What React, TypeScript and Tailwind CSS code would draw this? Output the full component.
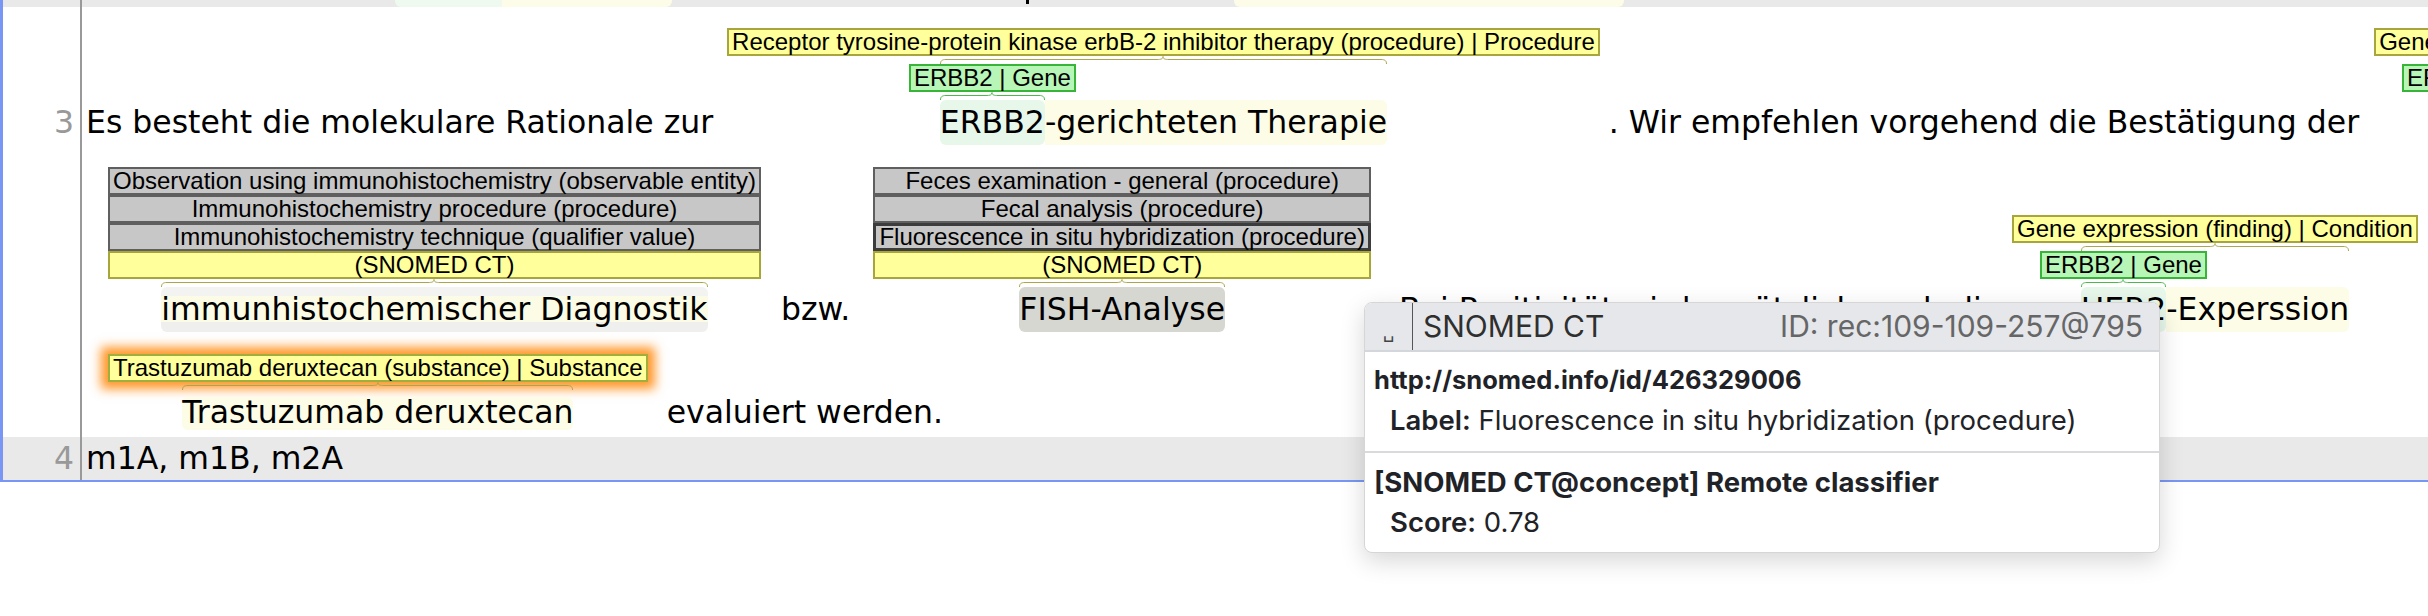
const MAIN = "font-['DejaVu_Sans',sans-serif]"
const LABEL = "font-['Liberation_Sans',Arial,sans-serif]"

type Tone = 'none' | 'yellow' | 'yellowR' | 'greenL' | 'gray' | 'ihc'

const toneClass: Record<Tone, string> = {
  none: '',
  yellow: 'rounded-md bg-[#fcfce7]',
  yellowR: 'rounded-r-md bg-[#fcfce7]',
  greenL: 'rounded-md bg-[#e7f8ea]',
  gray: 'rounded-md bg-[#d7d7d2]',
  ihc: 'rounded-md bg-[linear-gradient(to_bottom,#f3f3f1_9px,#fcfce6_9px,#fcfce6_35px,#efefed_35px)]',
}

/** Text segment on a visual row */
function Seg({ children, tone = 'none', short = false }: { children: string; tone?: Tone; short?: boolean }) {
  return (
    <span
      className={`block shrink-0 whitespace-pre text-[31.5px] text-black ${
        short ? 'h-[33px] leading-[30px]' : 'h-[45px] leading-[45px]'
      } ${toneClass[tone]}`}
    >
      {children}
    </span>
  )
}

type TagKind = 'yellow' | 'green' | 'gray' | 'grayActive' | 'glow'

const tagClass: Record<TagKind, string> = {
  yellow: 'h-[28px] border-2 border-[#a8a53c] bg-[#ffff9c] leading-[24px]',
  green: 'h-[28px] border-2 border-[#38b438] bg-[#b7f6b7] leading-[24px]',
  gray: 'h-[28px] border-2 border-[#5f5f5f] bg-[#c7c7c7] leading-[24px]',
  grayActive: 'h-[28px] border-[3px] border-[#3c3c3c] bg-[#c7c7c7] leading-[22px]',
  glow: 'h-[28px] border-2 border-[#9fae3c] bg-[#ffff9c] leading-[24px] shadow-[0_0_10px_7px_rgba(255,140,20,0.9)]',
}

function Tag({ children, kind }: { children: string; kind: TagKind }) {
  return (
    <div className={`${LABEL} shrink-0 whitespace-nowrap px-[3px] text-center text-[24px] text-black ${tagClass[kind]}`}>
      {children}
    </div>
  )
}

/** Label that is wider than its span: centred, but takes no room */
function Over({ children }: { children: React.ReactNode }) {
  return <div className="flex h-[28px] w-0 justify-center self-center">{children}</div>
}

function Brace({ tone }: { tone: 'olive' | 'green' }) {
  const color = tone === 'green' ? 'text-[#4cb84c]' : 'text-[#a9a64e]'
  return (
    <div className={`flex h-[8px] w-full ${color}`}>
      <svg width="6" height="8" viewBox="0 0 6 8" className="shrink-0">
        <path d="M0.5 8 C0.5 4.8 2 3.5 6 3.5" fill="none" stroke="currentColor" />
      </svg>
      <div className="mt-[3px] h-px flex-1 bg-current" />
      <svg width="12" height="8" viewBox="0 0 12 8" className="shrink-0">
        <path d="M0 3.5 C4 3.5 6 3 6 0.5 C6 3 8 3.5 12 3.5" fill="none" stroke="currentColor" />
      </svg>
      <div className="mt-[3px] h-px flex-1 bg-current" />
      <svg width="6" height="8" viewBox="0 0 6 8" className="shrink-0">
        <path d="M0 3.5 C4 3.5 5.5 4.8 5.5 8" fill="none" stroke="currentColor" />
      </svg>
    </div>
  )
}

function Stack({ items, active }: { items: string[]; active?: number }) {
  return (
    <div className="flex w-max flex-col">
      {items.map((t, i) => (
        <Tag key={t} kind={i === active ? 'grayActive' : 'gray'}>
          {t}
        </Tag>
      ))}
      <Tag kind="yellow">(SNOMED CT)</Tag>
    </div>
  )
}

function HerChunk({ className }: { className: string }) {
  return (
    <div className={`flex shrink-0 flex-col items-center ${className}`}>
      <Tag kind="yellow">Gene expression (finding) | Condition</Tag>
      <div className="flex flex-col">
        <Brace tone="olive" />
        <div className="flex items-end">
          <div className="flex flex-col items-center">
            <Over>
              <Tag kind="green">ERBB2 | Gene</Tag>
            </Over>
            <Brace tone="green" />
            <Seg tone="greenL">HER2</Seg>
          </div>
          <Seg tone="yellowR">-Experssion</Seg>
        </div>
      </div>
    </div>
  )
}

function Gutter({ n, className }: { n?: string; className: string }) {
  return (
    <div className={`w-[79px] shrink-0 border-r-2 border-[#999] pr-[6px] text-right text-[31.5px] text-[#999] ${className}`}>
      {n}
    </div>
  )
}

export default function App() {
  return (
    <div className={`${MAIN} relative h-[616px] w-full overflow-hidden bg-white`}>
      <div className="border-b-2 border-l-[3px] border-[#7897f4]">
        {/* tail of line 2 */}
        <div className="flex h-[7px] overflow-hidden bg-[#e9e9e9]">
          <Gutter className="h-[7px]" />
          <div className="ml-[313px] h-[7px] w-[107px] shrink-0 rounded-bl-md bg-[#eefaef]" />
          <div className="h-[7px] w-[170px] shrink-0 rounded-br-md bg-[#fcfce8]" />
          <div className="ml-[354px] h-[4px] w-[3px] shrink-0 bg-black" />
          <div className="ml-[205px] h-[7px] w-[390px] shrink-0 rounded-b-md bg-[#fcfce8]" />
        </div>

        {/* line 3 */}
        <div className="flex">
          <Gutter n="3" className="pt-[93px] leading-[45px]" />
          <div className="flex min-w-0 flex-1 flex-col overflow-hidden">
            <div className="flex h-[138px] items-end pl-[4px]">
              <Seg>Es besteht die molekulare Rationale zur </Seg>
              <div className="ml-[4px] mr-[9px] flex shrink-0 flex-col items-center">
                <Tag kind="yellow">Receptor tyrosine-protein kinase erbB-2 inhibitor therapy (procedure) | Procedure</Tag>
                <div className="flex flex-col">
                  <Brace tone="olive" />
                  <div className="flex items-end">
                    <div className="flex flex-col items-center">
                      <Over>
                        <Tag kind="green">ERBB2 | Gene</Tag>
                      </Over>
                      <Brace tone="green" />
                      <Seg tone="greenL">ERBB2</Seg>
                    </div>
                    <Seg tone="yellowR">-gerichteten Therapie</Seg>
                  </div>
                </div>
              </div>
              <Seg>. Wir empfehlen vorgehend die Bestätigung der </Seg>
              <HerChunk className="ml-[5px]" />
            </div>

            <div className="flex h-[187px] items-end pl-[16px]">
              <div className="ml-[10px] mr-[10px] flex shrink-0 flex-col items-center">
                <Stack
                  items={[
                    'Observation using immunohistochemistry (observable entity)',
                    'Immunohistochemistry procedure (procedure)',
                    'Immunohistochemistry technique (qualifier value)',
                  ]}
                />
                <div className="flex flex-col">
                  <Brace tone="olive" />
                  <Seg tone="ihc">immunhistochemischer Diagnostik</Seg>
                </div>
              </div>
              <Seg> bzw. </Seg>
              <div className="ml-[13px] mr-[8px] flex shrink-0 flex-col items-center">
                <Stack
                  items={[
                    'Feces examination - general (procedure)',
                    'Fecal analysis (procedure)',
                    'Fluorescence in situ hybridization (procedure)',
                  ]}
                  active={2}
                />
                <div className="flex flex-col">
                  <Brace tone="olive" />
                  <Seg tone="gray">FISH-Analyse</Seg>
                </div>
              </div>
              <Seg>. Bei Positivität wird zusätzlich auch die </Seg>
              <HerChunk className="ml-[1px]" />
            </div>

            <div className="flex h-[98px] items-end pl-[16px]">
              <div className="ml-[10px] mr-[9px] flex shrink-0 flex-col items-center">
                <Tag kind="glow">Trastuzumab deruxtecan (substance) | Substance</Tag>
                <div className="flex flex-col">
                  <Brace tone="olive" />
                  <div className="h-[7px]" />
                  <Seg tone="yellow" short>
                    Trastuzumab deruxtecan
                  </Seg>
                </div>
              </div>
              <Seg short> evaluiert werden.</Seg>
            </div>
            <div className="h-[7px]" />
          </div>
        </div>

        {/* line 4 */}
        <div className="flex h-[43px] bg-[#e9e9e9]">
          <Gutter n="4" className="leading-[43px]" />
          <div className="pl-[4px] text-[31.5px] leading-[43px] text-black">m1A, m1B, m2A</div>
        </div>
      </div>

      {/* hover popup */}
      <div className="absolute left-[1364px] top-[302px] w-[796px] overflow-hidden rounded-lg border border-[#d6d6d6] bg-white font-['Inter',sans-serif] shadow-[0_8px_24px_rgba(0,0,0,0.16)]">
        <div className="flex h-[49px] border-b-2 border-[#d3d6db] bg-[#e5e7eb]">
          <div className="flex w-[47px] items-end justify-center pb-[9px] font-['DejaVu_Sans',sans-serif] text-[18px] leading-none text-[#444]">
            ␣
          </div>
          <div className="w-px bg-[#555]" />
          <div className="flex flex-1 items-center justify-between pl-[10px] pr-[16px] text-[30px]">
            <span className="text-[#2f2f2f]">SNOMED CT</span>
            <span className="text-[#666]">ID: rec:109-109-257@795</span>
          </div>
        </div>
        <div className="px-[9px] pb-[11px] pt-[8px] text-[27.5px] leading-[40px] text-[#1f2328]">
          <div className="text-[25.5px] font-bold">http://snomed.info/id/426329006</div>
          <div className="pl-[16px]">
            <span className="font-semibold">Label:</span> Fluorescence in situ hybridization (procedure)
          </div>
        </div>
        <div className="border-t-2 border-[#d8dadd] px-[9px] pb-[10px] pt-[9px] text-[27.5px] leading-[40px] text-[#1f2328]">
          <div className="font-bold">[SNOMED CT@concept] Remote classifier</div>
          <div className="pl-[16px]">
            <span className="font-semibold">Score:</span> 0.78
          </div>
        </div>
      </div>
    </div>
  )
}
